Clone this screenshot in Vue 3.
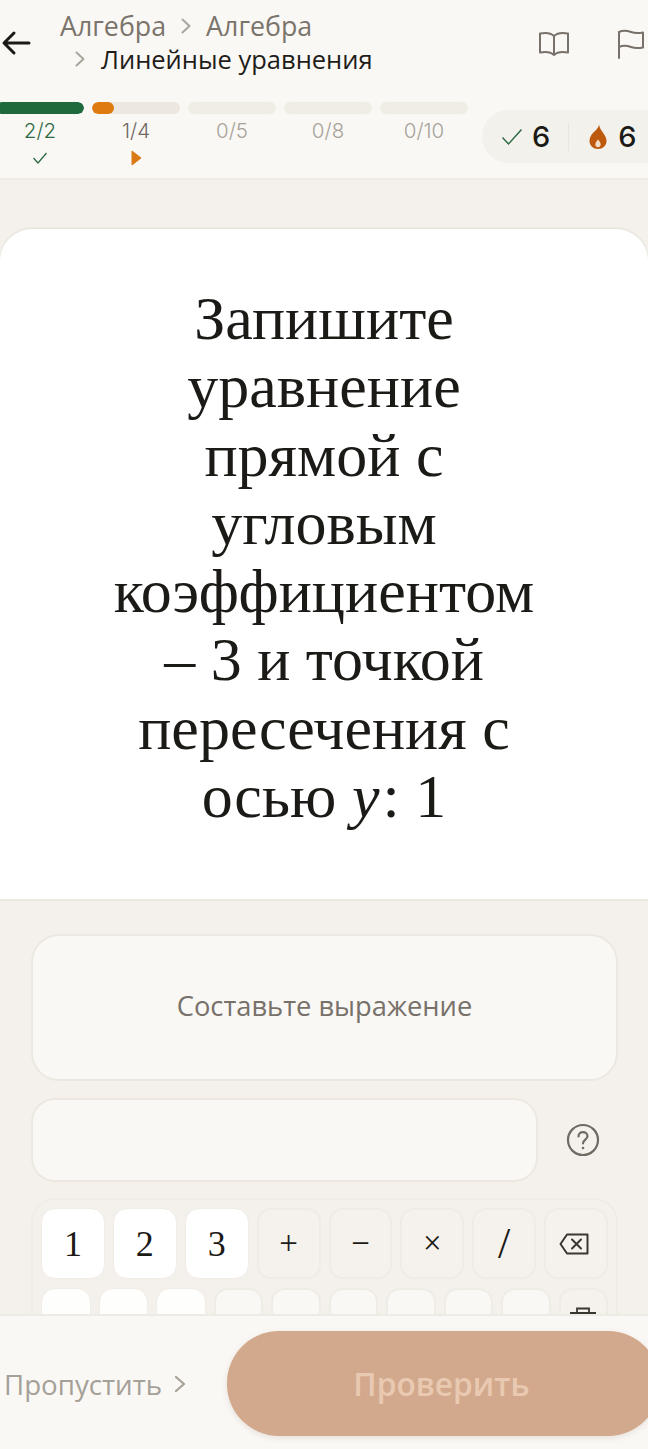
<script setup>
const segments = [
  { label: '2/2', fill: 100, state: 'done' },
  { label: '1/4', fill: 25, state: 'active' },
  { label: '0/5', fill: 0, state: 'idle' },
  { label: '0/8', fill: 0, state: 'idle' },
  { label: '0/10', fill: 0, state: 'idle' }
]
const topKeys = [
  { t: '1', k: 'num' }, { t: '2', k: 'num' }, { t: '3', k: 'num' },
  { t: '+', k: 'op' }, { t: '−', k: 'op' }, { t: '×', k: 'op' }, { t: '/', k: 'op slash' }
]
const lowerKeys = Array.from({ length: 9 }, (_, i) => (i < 3 ? 'num' : 'op'))
</script>

<template>
  <div class="page">
    <header class="head">
      <div class="top">
        <button class="back" aria-label="Назад">
          <svg width="30" height="26" viewBox="0 0 30 26" fill="none" stroke="#1c1a17" stroke-width="3" stroke-linecap="round" stroke-linejoin="round">
            <path d="M28 13H3.500M13 3 3 13l10 10" />
          </svg>
        </button>
        <div class="crumbs">
          <div class="crumb-line">
            <span>Алгебра</span>
            <svg class="chev" width="10" height="16" viewBox="0 0 10 16" fill="none"><path d="m1.500 1.500 7 6.500-7 6.500" /></svg>
            <span>Алгебра</span>
          </div>
          <div class="crumb-line second">
            <svg class="chev" width="10" height="16" viewBox="0 0 10 16" fill="none"><path d="m1.500 1.500 7 6.500-7 6.500" /></svg>
            <span class="current">Линейные уравнения</span>
          </div>
        </div>
        <div class="tools">
          <svg width="32" height="28" viewBox="0 0 32 28" fill="none" stroke="#77716a" stroke-width="2" stroke-linejoin="round" stroke-linecap="round">
            <path d="M16 7C13 4 7 3.500 2 4.500v19c5-1 11-.5 14 2.500 3-3 9-3.500 14-2.500v-19C25 3.500 19 4 16 7Zm0 0v19" />
          </svg>
          <svg width="28" height="30" viewBox="0 0 28 30" fill="none" stroke="#77716a" stroke-width="2" stroke-linejoin="round" stroke-linecap="round">
            <path d="M2 29V3c4-2 8-1.500 12 0s7 1.500 12 .5v15c-5 1-8 1-12-.5s-8-2-12 0" />
          </svg>
        </div>
      </div>
      <div class="progress">
        <div class="segments">
          <div v-for="s in segments" :key="s.label" class="segment" :class="s.state">
            <div class="track"><div class="fill" :style="{ width: s.fill + '%' }"></div></div>
            <div class="count">{{ s.label }}</div>
            <svg v-if="s.state === 'done'" class="mark" width="16" height="12" viewBox="0 0 16 12" fill="none" stroke="#2d6a45" stroke-width="1.300"><path d="m1.500 6 4.500 5 8.500-10" /></svg>
            <svg v-if="s.state === 'active'" class="mark" width="16" height="16" viewBox="0 0 16 16"><path d="M4 1 13 8l-9 7Z" fill="#d97a16" stroke="#d97a16" stroke-linejoin="round" /></svg>
          </div>
        </div>
        <div class="chip">
          <svg width="22" height="18" viewBox="0 0 22 18" fill="none" stroke="#2d6a45" stroke-width="1.500"><path d="m1.500 9.500 6 6.500L20.500 1.500" /></svg>
          <b>6</b>
          <i class="sep"></i>
          <svg class="flame" width="18" height="26" viewBox="0 0 18 26">
            <path d="M10 .5c.5 4 2.500 5.500 4.500 9 2 3 3 5 3 7.500 0 4.500-3.800 8-8.500 8S.5 21.500.5 17c0-3 1.300-5.500 3-7.500C6 6.500 9.500 4.500 10 .5Z" fill="#bd5a0e" />
            <path d="M9 15.500c1.500 2 2.700 3.200 2.700 5 0 1.600-1.200 2.800-2.700 2.800s-2.700-1.200-2.700-2.800c0-1.800 1.300-3 2.700-5Z" fill="#f5ddc6" />
          </svg>
          <b class="last">6</b>
        </div>
      </div>
    </header>

    <main class="body">
      <section class="card">
        <h1 class="question">Запишите уравнение прямой с угловым коэффициентом – 3 и точкой пересечения с осью <em>y</em>: 1</h1>
      </section>
      <section class="work">
        <div class="prompt">Составьте выражение</div>
        <div class="answer-row">
          <div class="answer"></div>
          <svg width="34" height="34" viewBox="0 0 34 34" fill="none" stroke="#6f6a62" stroke-width="2.200">
            <circle cx="17" cy="17" r="15" />
            <path d="M12.500 13.500c0-2.600 2-4.300 4.500-4.300s4.500 1.700 4.500 4c0 3.500-4.500 3.500-4.500 7.300" stroke-linecap="round" />
            <circle cx="17" cy="25" r="1.300" fill="#6f6a62" stroke="none" />
          </svg>
        </div>
        <div class="pad">
          <div class="keys row-top">
            <div v-for="key in topKeys" :key="key.t" class="key" :class="key.k">{{ key.t }}</div>
            <div class="key op">
              <svg class="erase" width="30" height="22" viewBox="0 0 30 22" fill="none" stroke="#3a3733" stroke-width="2" stroke-linejoin="round">
                <path d="M8 1.500h20.500v19H8L1.500 11Z" />
                <path d="m13 6.500 9 9M22 6.500l-9 9" stroke-linecap="round" />
              </svg>
            </div>
          </div>
          <div class="keys row-low">
            <div v-for="(k, i) in lowerKeys" :key="i" class="key" :class="k"></div>
            <div class="key op trash">
              <svg width="28" height="10" viewBox="0 0 28 10" fill="none" stroke="#3a3733" stroke-width="1.800"><path d="M1 7h26M8 7V2.500h12V7" /></svg>
            </div>
          </div>
        </div>
      </section>
    </main>

    <footer class="foot">
      <button class="skip">
        Пропустить
        <svg width="12" height="18" viewBox="0 0 12 18" fill="none" stroke="#a5a098" stroke-width="2.200" stroke-linecap="round" stroke-linejoin="round"><path d="m2 2 8 7-8 7" /></svg>
      </button>
      <button class="check">Проверить</button>
    </footer>
  </div>
</template>

<style>
html, body { margin: 0; background: #faf8f5; }
</style>

<style scoped>
.page {
  width: 648px;
  height: 1449px;
  overflow: hidden;
  display: flex;
  flex-direction: column;
  font-family: "Open Sans", "Noto Sans", sans-serif;
  background: #faf8f5;
}
button { border: 0; background: none; padding: 0; font: inherit; }

.head {
  height: 180px;
  flex: none;
  box-sizing: border-box;
  border-bottom: 2px solid #eeebe5;
}
.top {
  height: 102px;
  display: flex;
  align-items: flex-start;
  padding-left: 1px;
}
.back { width: 59px; flex: none; display: flex; margin-top: 30px; }
.crumbs { width: 450px; flex: none; padding-top: 9px; font-size: 26.800px; line-height: 34px; color: #7a746b; }
.crumb-line { display: flex; align-items: center; gap: 15px; height: 33px; }
.second { padding-left: 15px; gap: 16px; }
.chev path { stroke: #aaa59d; stroke-width: 2; stroke-linecap: round; stroke-linejoin: round; }
.current { color: #1f1d1a; font-size: 25.500px; font-weight: 500; }
.tools { display: flex; gap: 47px; padding-top: 29px; padding-left: 28px; flex: none; }

.progress { display: flex; align-items: flex-start; position: relative; }
.segments { display: flex; gap: 8px; flex: none; margin-left: -4px; }
.segment { width: 88px; display: flex; flex-direction: column; align-items: center; }
.track { width: 100%; height: 12px; border-radius: 6px; background: #f0ede7; overflow: hidden; }
.active .track { background: #ece8e1; }
.fill { height: 100%; border-radius: 6px; }
.done .fill { background: #1e6a3c; }
.active .fill { background: #dd7a10; }
.count { font-family: "Inter", sans-serif; font-size: 20.500px; font-weight: 300; line-height: 24px; margin-top: 5px; color: #a7a29a; }
.done .count { color: #2d6a45; }
.active .count { color: #6f6a62; }
.mark { margin-top: 9px; }
.active .mark { margin-top: 7px; }
.chip {
  position: absolute;
  left: 482px;
  top: 8px;
  width: 190px;
  height: 53px;
  box-sizing: border-box;
  border-radius: 27px;
  background: #f3f1ec;
  display: flex;
  align-items: center;
  padding-left: 19px;
  color: #1c1a17;
}
.chip b { font-family: "Inter", sans-serif; font-weight: 500; font-size: 29px; margin-left: 9px; }
.chip b.last { margin-left: 11px; }
.sep { width: 1px; height: 28px; background: #e8e4de; margin: 0 20px 0 18px; }

.body { flex: 1; min-height: 0; overflow: hidden; background: #f4f1ec; padding-top: 49px; }
.card {
  box-sizing: border-box;
  height: 672px;
  background: #fff;
  border-radius: 32px 32px 0 0;
  border-bottom: 2px solid #ebe8e2;
  box-shadow: 0 -1px 2px rgba(90, 80, 60, .12);
  padding: 55px 104px 0;
}
.question {
  margin: 0;
  font-family: "Liberation Serif", serif;
  font-weight: 400;
  font-size: 62px;
  line-height: 68.300px;
  text-align: center;
  color: #1c1a17;
}
.question em { font-style: italic; padding-right: 3px; }

.work { padding: 33px 30px 0 31px; }
.prompt {
  box-sizing: border-box;
  height: 147px;
  border: 2px solid #ece8e1;
  border-radius: 28px;
  background: #faf8f5;
  display: flex;
  align-items: center;
  justify-content: center;
  font-size: 27.300px;
  color: #77716a;
  padding-bottom: 5px;
}
.answer-row { display: flex; align-items: center; gap: 28px; margin-top: 17px; }
.answer {
  box-sizing: border-box;
  width: 507px;
  height: 84px;
  border: 2px solid #ece8e1;
  border-radius: 24px;
  background: #faf8f5;
}
.pad {
  box-sizing: border-box;
  height: 200px;
  margin-top: 16px;
  border: 2px solid #efece6;
  border-radius: 24px;
  padding: 8px;
}
.keys { display: grid; gap: 8px; }
.row-top { grid-template-columns: repeat(8, 1fr); height: 71px; }
.row-low { grid-template-columns: repeat(10, 1fr); height: 71px; margin-top: 9px; }
.key {
  box-sizing: border-box;
  border-radius: 14px;
  display: flex;
  align-items: center;
  justify-content: center;
  color: #1c1a17;
  font-family: "Liberation Serif", serif;
}
.num { background: #fff; border: 1px solid #f0ede7; font-size: 36px; }
.op { background: #f5f2ed; border: 2px solid #efece6; font-size: 33px; }
.slash { font-size: 44px; }
.erase { margin-right: 5px; }
.row-low .num { background: #fefefd; }
.row-low .op { background: #faf8f5; }
.row-low .op.trash { background: #f5f2ed; align-items: flex-start; padding-top: 16px; }

.foot {
  height: 135px;
  flex: none;
  box-sizing: border-box;
  border-top: 2px solid #eeebe5;
  background: #faf8f5;
  display: flex;
  align-items: flex-start;
  padding: 15px 0 0 4px;
  position: relative;
}
.skip {
  width: 223px;
  flex: none;
  display: flex;
  align-items: center;
  gap: 12px;
  height: 105px;
  color: #a5a098;
  font-size: 27.700px;
}
.check {
  width: 433px;
  height: 105px;
  flex: none;
  border-radius: 52px;
  background: #d2a98c;
  box-shadow: 0 2px 6px rgba(90, 60, 40, .12);
  color: #e9c9b1;
  font-size: 31.700px;
  font-weight: 600;
  padding-right: 4px;
}
</style>
